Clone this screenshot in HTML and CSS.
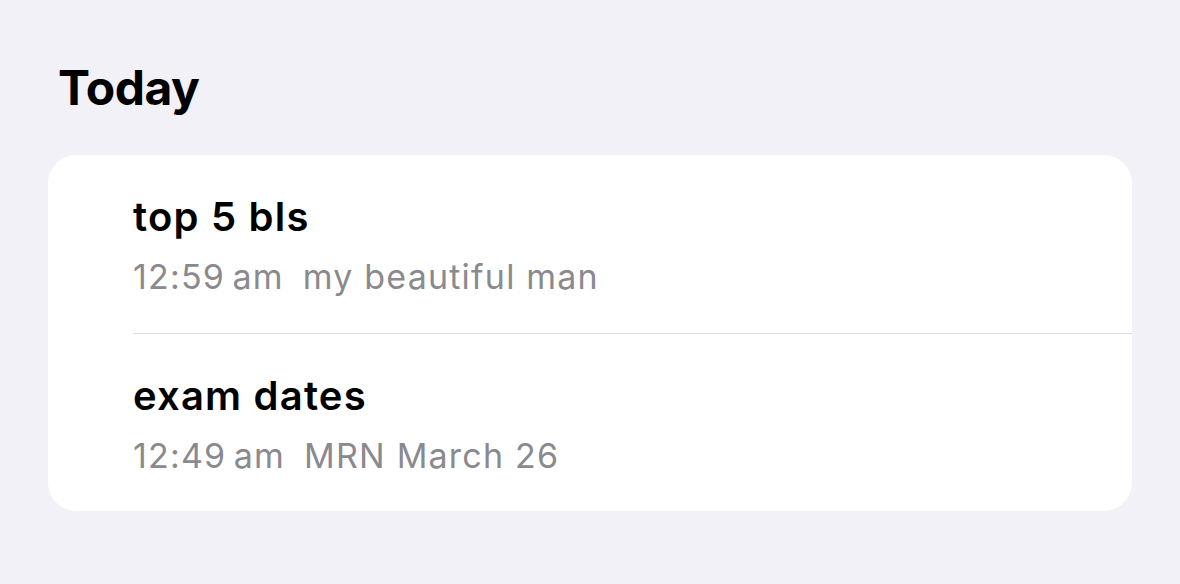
FILE: index.html
```html
<!DOCTYPE html>
<html lang="en">
<head>
    <meta charset="UTF-8">
    <meta name="viewport" content="width=device-width, initial-scale=1.0">
    <title>Notes</title>
    <link rel="stylesheet" href="styles.css">
</head>
<body>
    <section class="notes-group">
        <h1 class="group-title">Today</h1>

        <div class="card">
            <div class="note">
                <div class="note-body">
                    <div class="note-title">top 5 bls</div>
                    <div class="note-meta"><span class="note-time">12:59&#8201;am</span><span class="note-preview">my beautiful man</span></div>
                </div>
            </div>
            <div class="note">
                <div class="note-body last">
                    <div class="note-title">exam dates</div>
                    <div class="note-meta"><span class="note-time">12:49&#8201;am</span><span class="note-preview">MRN March 26</span></div>
                </div>
            </div>
        </div>
    </section>
</body>
</html>
```

FILE: styles.css
```css
body {
    margin: 0;
    padding: 0;
    background-color: #f2f1f7;
    font-family: Inter, "Noto Sans", sans-serif;
    color: #000;
}
.notes-group {
    padding: 59px 48px 0;
}
.group-title {
    margin: 0 0 38px 10px;
    font-size: 48px;
    line-height: 58px;
    font-weight: 700;
    letter-spacing: -0.5px;
}
.card {
    background-color: #fff;
    border-radius: 28px;
    overflow: hidden;
}
.note {
    padding-left: 85px;
}
.note-body {
    display: flex;
    flex-direction: column;
    gap: 15px;
    padding: 38px 0 35px;
    border-bottom: 1px solid #dcdce0;
}
.note-body.last {
    border-bottom: none;
    padding-top: 38px;
    padding-bottom: 34px;
}
.note-title {
    font-size: 40px;
    line-height: 48px;
    font-weight: 600;
    letter-spacing: 1.2px;
}
.note-meta {
    font-size: 34px;
    line-height: 42px;
    color: #8a8a8e;
    letter-spacing: 1.2px;
    display: flex;
    gap: 19px;
}
```
